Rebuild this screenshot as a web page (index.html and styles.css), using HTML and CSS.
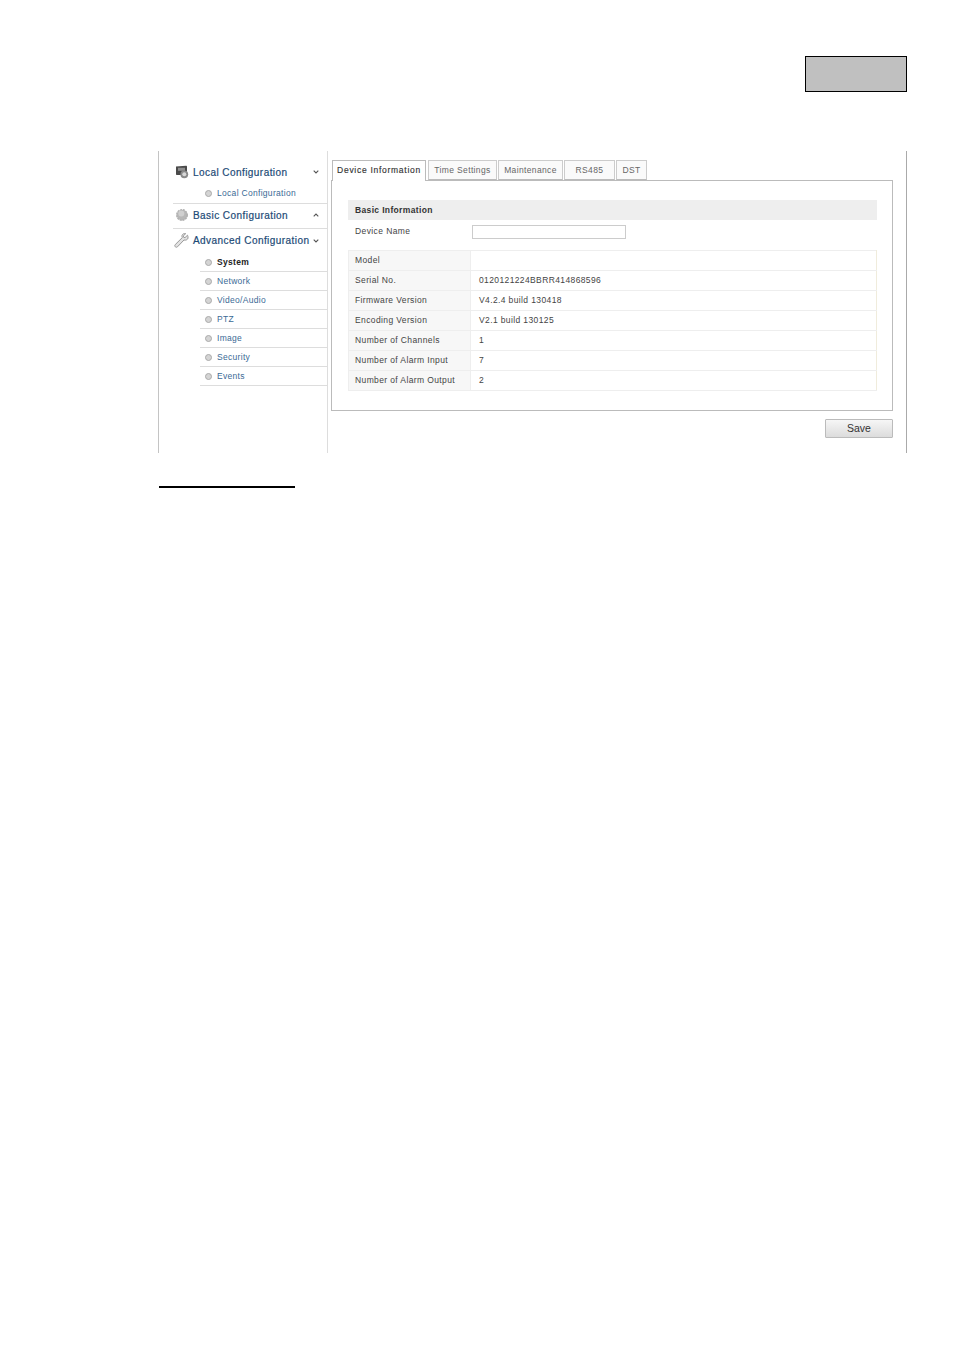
FILE: index.html
```html
<!DOCTYPE html>
<html>
<head>
<meta charset="utf-8">
<title>Device Information</title>
<link rel="stylesheet" href="styles.css">
</head>
<body>
<div class="chapter-box"></div>
<div class="shot">
  <aside class="side">
    <div class="group-head top">
      <svg class="gicon" viewBox="0 0 14 14"><path d="M1 1.500 11 .8c.6 0 1 .4 1 1v8.200H2c-.6 0-1-.4-1-1Z" fill="#4a4a4a"/><rect x="3" y="2.800" width="7" height="3" fill="#8f8f8f"/><circle cx="9.300" cy="9.300" r="3.900" fill="#8a8a8a"/><circle cx="9.300" cy="9.300" r="2" fill="#d8d8d8"/></svg>
      <span class="gname">Local Configuration</span>
      <svg class="chev" viewBox="0 0 6 4"><path d="M.7.7 3 3 5.300.7" fill="none" stroke="#555" stroke-width="1.100"/></svg>
    </div>
    <ul class="subs first">
      <li class="sub"><i class="dot"></i>Local Configuration</li>
    </ul>
    <div class="group-head basic">
      <svg class="gicon" viewBox="0 0 14 14"><circle cx="7" cy="7" r="5.300" fill="#b8b8b8" stroke="#b0b0b0" stroke-width="1.400" stroke-dasharray="2 .8"/><circle cx="6.300" cy="5.600" r="3" fill="#d0d0d0"/></svg>
      <span class="gname">Basic Configuration</span>
      <svg class="chev" viewBox="0 0 6 4"><path d="M.7 3.300 3 1l2.300 2.300" fill="none" stroke="#555" stroke-width="1.100"/></svg>
    </div>
    <div class="group-head adv">
      <svg class="gicon wide" viewBox="0 0 15 15"><path d="M13.500 2.200 11 4.600 9.600 4.200 9.300 2.900 11.700.7C10 .2 8.400 1 8 2.500c-.2.800 0 1.500.3 2.100L1.300 11.500c-.7.700-.7 1.700 0 2.300.6.600 1.600.6 2.200 0L10 7c1.900.5 3.500-.3 4-1.800.1-1 0-2.200-.5-3Z" fill="#e2e2e2" stroke="#999" stroke-width="1"/></svg>
      <span class="gname">Advanced Configuration</span>
      <svg class="chev" viewBox="0 0 6 4"><path d="M.7.7 3 3 5.300.7" fill="none" stroke="#555" stroke-width="1.100"/></svg>
    </div>
    <ul class="subs">
      <li class="sub current"><i class="dot"></i>System</li>
      <li class="sub"><i class="dot"></i>Network</li>
      <li class="sub"><i class="dot"></i>Video/Audio</li>
      <li class="sub"><i class="dot"></i>PTZ</li>
      <li class="sub"><i class="dot"></i>Image</li>
      <li class="sub"><i class="dot"></i>Security</li>
      <li class="sub"><i class="dot"></i>Events</li>
    </ul>
  </aside>
  <main class="main">
    <div class="tabs">
      <div class="tab active">Device Information</div>
      <div class="tab t-time">Time Settings</div>
      <div class="tab t-maint">Maintenance</div>
      <div class="tab t-rs">RS485</div>
      <div class="tab t-dst">DST</div>
    </div>
    <section class="panel">
      <div class="title">Basic Information</div>
      <div class="name-row">
        <label class="name-label">Device Name</label>
        <input class="name-input" type="text">
      </div>
      <table class="info">
        <tr><th>Model</th><td></td></tr>
        <tr><th>Serial No.</th><td>0120121224BBRR414868596</td></tr>
        <tr><th>Firmware Version</th><td>V4.2.4 build 130418</td></tr>
        <tr><th>Encoding Version</th><td>V2.1 build 130125</td></tr>
        <tr><th>Number of Channels</th><td>1</td></tr>
        <tr><th>Number of Alarm Input</th><td>7</td></tr>
        <tr><th>Number of Alarm Output</th><td>2</td></tr>
      </table>
    </section>
    <div class="actions"><button class="save" type="button">Save</button></div>
  </main>
</div>
<div class="rule"></div>
</body>
</html>
```
FILE: styles.css
```css
* { box-sizing: border-box; }
html, body { margin: 0; padding: 0; background: #fff; }
body { height: 1350px; overflow: hidden; padding-top: 56px; font-family: "Liberation Sans", Arial, sans-serif; color: #333; }

.chapter-box { width: 102px; height: 36px; margin-left: 805px; background: #c0c0c0; border: 1px solid #000; }

.shot { display: flex; width: 749px; height: 302px; margin: 59px 0 0 158px; border-left: 1px solid #c4c4c4; border-right: 1px solid #aaa; }
.side { width: 169px; flex: none; padding: 9px 0 0 14px; border-right: 1px solid #ddd; }
.main { flex: 1; padding: 9px 13px 0 3px; }

.group-head { display: flex; align-items: center; }
.group-head.top { height: 25px; padding-bottom: 1px; }
.group-head.basic { height: 25px; padding-bottom: 2px; border-bottom: 1px solid #ddd; }
.group-head.adv { height: 24px; padding-bottom: 1px; }
.gicon { width: 14px; height: 14px; margin-left: 2px; flex: none; }
.gicon.wide { width: 15px; height: 15px; margin-left: 1px; }
.gname { margin-left: 4px; font-size: 10px; color: #1c4a76; letter-spacing: .44px; flex: 1; white-space: nowrap; -webkit-text-stroke: .2px #1c4a76; }
.chev { width: 6px; height: 4px; margin-right: 8px; flex: none; }

.subs { list-style: none; margin: 0; padding: 0 0 0 27px; }
.sub { display: flex; align-items: center; height: 19px; padding-left: 5px; border-bottom: 1px solid #ddd; font-size: 8.500px; color: #3a6a95; letter-spacing: .3px; white-space: nowrap; }
.subs.first { padding-left: 0; }
.subs.first .sub { padding: 0 0 2px 32px; }
.sub.current { color: #222; font-weight: bold; }
.dot { width: 7px; height: 7px; margin-right: 5px; flex: none; border-radius: 50%; background: #d4d4d4; border: 1.500px solid #aaa; }

.tabs { display: flex; height: 21px; padding-left: 1px; position: relative; z-index: 1; }
.tab { height: 20px; margin-right: 1px; border: 1px solid #ccc; border-bottom: 1px solid #bbb; background: #fafafa; font-size: 8.500px; letter-spacing: .36px; color: #666; display: flex; align-items: center; justify-content: center; white-space: nowrap; }
.tab.active { width: 94px; height: 21px; margin-right: 2px; padding-bottom: 2px; background: #fff; border-color: #bbb; border-bottom: 0; color: #333; letter-spacing: .72px; -webkit-text-stroke: .15px #333; }
.t-time { width: 69px; }
.t-maint { width: 65px; }
.t-rs { width: 51px; }
.t-dst { width: 31px; }

.panel { height: 231px; margin-top: -1px; padding: 19px 15px 0 16px; border: 1px solid #bbb; }
.title { height: 20px; padding-left: 7px; background: #eee; font-size: 8.500px; font-weight: bold; letter-spacing: .35px; line-height: 21px; color: #333; }
.name-row { display: flex; align-items: center; height: 24px; padding-left: 7px; }
.name-label { width: 117px; padding-bottom: 2px; font-size: 8.500px; letter-spacing: .4px; color: #444; }
.name-input { width: 154px; height: 14px; padding: 0; border: 1px solid #ccc; background: #fff; }

.info { width: 100%; margin-top: 6px; border-collapse: collapse; table-layout: fixed; font-size: 8.500px; letter-spacing: .38px; }
.info tr { height: 20px; }
.info th, .info td { padding: 0 0 2px 6px; border: 1px solid #eee; text-align: left; font-weight: normal; color: #444; white-space: nowrap; }
.info th { width: 122px; background: #f7f7f7; }
.info td { padding-left: 8px; background: #fff; border-right-color: #f0ecdc; }

.actions { display: flex; justify-content: flex-end; margin-top: 8px; }
.save { width: 68px; height: 19px; padding: 0 0 2px; border: 1px solid #bbb; border-radius: 1px; background: linear-gradient(#f6f6f6, #dcdcdc); font-family: inherit; font-size: 10.500px; color: #333; }

.rule { width: 136px; height: 2px; margin: 33px 0 0 159px; background: #000; }
```
